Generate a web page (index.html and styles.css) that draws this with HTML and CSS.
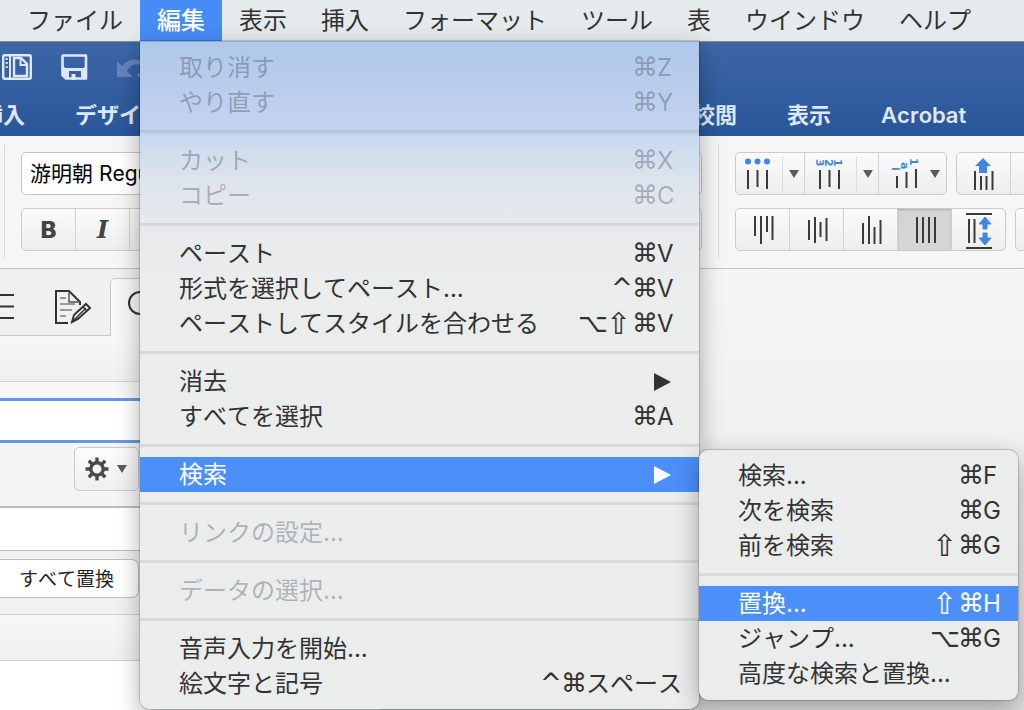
FILE: index.html
```html
<!DOCTYPE html>
<html lang="ja">
<head>
<meta charset="utf-8">
<title>編集メニュー</title>
<link rel="stylesheet" href="styles.css">
</head>
<body>
<nav class="menubar" aria-label="メニューバー">
  <ul class="menubar-list">
    <li><button class="menubar-item">ファイル</button></li>
    <li class="menubar-open">
      <button class="menubar-item is-open">編集</button>
      <ul class="menu menu-edit">
        <li><button class="item" disabled><span>取り消す</span><span class="keys"><i>⌘</i><b>Z</b></span></button></li>
        <li><button class="item" disabled><span>やり直す</span><span class="keys"><i>⌘</i><b>Y</b></span></button></li>
        <li class="rule"></li>
        <li><button class="item" disabled><span>カット</span><span class="keys"><i>⌘</i><b>X</b></span></button></li>
        <li><button class="item" disabled><span>コピー</span><span class="keys"><i>⌘</i><b>C</b></span></button></li>
        <li class="rule"></li>
        <li><button class="item"><span>ペースト</span><span class="keys"><i>⌘</i><b>V</b></span></button></li>
        <li><button class="item"><span>形式を選択してペースト...</span><span class="keys"><i class="ctrl">^</i><i>⌘</i><b>V</b></span></button></li>
        <li><button class="item"><span>ペーストしてスタイルを合わせる</span><span class="keys"><i class="opt">⌥</i><i class="shift">⇧</i><i>⌘</i><b>V</b></span></button></li>
        <li class="rule"></li>
        <li><button class="item"><span>消去</span><svg class="more" viewBox="0 0 18 18"><path d="M0 0L17 9L0 18Z"/></svg></button></li>
        <li><button class="item"><span>すべてを選択</span><span class="keys"><i>⌘</i><b>A</b></span></button></li>
        <li class="rule"></li>
        <li class="has-submenu">
          <button class="item is-active"><span>検索</span><svg class="more" viewBox="0 0 18 18"><path d="M0 0L17 9L0 18Z"/></svg></button>
          <ul class="menu menu-find">
            <li><button class="item"><span>検索...</span><span class="keys"><i>⌘</i><b>F</b></span></button></li>
            <li><button class="item"><span>次を検索</span><span class="keys"><i>⌘</i><b>G</b></span></button></li>
            <li><button class="item"><span>前を検索</span><span class="keys"><i class="shift">⇧</i><i>⌘</i><b>G</b></span></button></li>
            <li class="rule"></li>
            <li><button class="item is-active"><span>置換...</span><span class="keys"><i class="shift">⇧</i><i>⌘</i><b>H</b></span></button></li>
            <li><button class="item"><span>ジャンプ...</span><span class="keys"><i class="opt">⌥</i><i>⌘</i><b>G</b></span></button></li>
            <li><button class="item"><span>高度な検索と置換...</span></button></li>
          </ul>
        </li>
        <li class="rule"></li>
        <li><button class="item" disabled><span>リンクの設定...</span></button></li>
        <li class="rule"></li>
        <li><button class="item" disabled><span>データの選択...</span></button></li>
        <li class="rule"></li>
        <li><button class="item"><span>音声入力を開始...</span></button></li>
        <li><button class="item"><span>絵文字と記号</span><span class="keys"><i class="ctrl">^</i><i>⌘</i><b>スペース</b></span></button></li>
      </ul>
    </li>
    <li><button class="menubar-item">表示</button></li>
    <li><button class="menubar-item">挿入</button></li>
    <li><button class="menubar-item">フォーマット</button></li>
    <li><button class="menubar-item">ツール</button></li>
    <li><button class="menubar-item">表</button></li>
    <li><button class="menubar-item">ウインドウ</button></li>
    <li><button class="menubar-item">ヘルプ</button></li>
  </ul>
</nav>

<header class="titlebar">
  <div class="quick">
    <button class="quick-btn" aria-label="表示切替">
      <svg width="30" height="26" viewBox="0 0 30 26"><rect x="1.2" y="1.2" width="27.6" height="23.6" rx="1.5" fill="none" stroke="currentColor" stroke-width="2.4"/><path d="M8 1V25" stroke="currentColor" stroke-width="2"/><path d="M4.7 4V15" stroke="currentColor" stroke-width="2" stroke-dasharray="2 2"/><path d="M12 4H19L25 10V22H12Z" fill="none" stroke="currentColor" stroke-width="2.4"/><path d="M18.500 4V11H25" fill="none" stroke="currentColor" stroke-width="2"/></svg>
    </button>
    <button class="quick-btn" aria-label="保存">
      <svg width="27" height="26" viewBox="0 0 27 26"><path d="M2 1.500H25V24.500H5L1.500 21V2Z" fill="none" stroke="currentColor" stroke-width="2.600" stroke-linejoin="round"/><path d="M2 11L4 14H23L25 11V25H20V17H8V25H5L2 21Z" fill="currentColor"/><rect x="10.500" y="20" width="4" height="6" fill="currentColor"/></svg>
    </button>
    <button class="quick-btn is-faint" aria-label="元に戻す">
      <svg width="30" height="26" viewBox="0 0 30 26"><path d="M0 7V23H16L10 17C14 10 20 8 27 13V8C18 3 10 6 5 12Z" fill="currentColor"/><circle cx="22" cy="21" r="2" fill="currentColor"/></svg>
    </button>
  </div>
  <nav class="tabs" aria-label="リボン">
    <a href="#">挿入</a><a href="#">デザイン</a><a href="#">レイアウト</a><a href="#">参考資料</a><a href="#">差し込み文書</a><a href="#">校閲</a><a href="#">表示</a><a href="#">Acrobat</a>
  </nav>
</header>

<section class="ribbon">
  <div class="font-tools">
    <div class="tool-row">
      <input class="font-name" aria-label="フォント" value="游明朝 Regular">
    </div>
    <div class="tool-row">
      <div class="group group-wide">
        <button class="cell glyph">B</button>
        <button class="cell glyph italic">I</button>
        <span class="cell-rest"></span>
      </div>
    </div>
  </div>
  <div class="para-tools">
    <div class="tool-row">
      <div class="group">
        <button class="cell split" aria-label="箇条書き">
          <svg width="46" height="43" viewBox="0 0 46 43"><g class="blue"><circle cx="12" cy="9.500" r="3"/><circle cx="21.500" cy="9.500" r="3"/><circle cx="31" cy="9.500" r="3"/></g><path class="bars" d="M12 18V37M21.500 18V35M31 18V37"/></svg>
          <span class="caret-box"><span class="caret"></span></span>
        </button>
        <button class="cell split" aria-label="段落番号">
          <svg width="51" height="43" viewBox="0 0 51 43"><g class="blue digits"><text transform="translate(11 7) rotate(90)">3</text><text transform="translate(20 7) rotate(90)">2</text><text transform="translate(29 7) rotate(90)">1</text></g><path class="bars" d="M15 18V37M24.500 18V35M34 18V37"/></svg>
          <span class="caret-box"><span class="caret"></span></span>
        </button>
        <button class="cell split plain" aria-label="アウトライン">
          <svg width="45" height="43" viewBox="0 0 45 43"><g class="blue digits"><text transform="translate(13 15) rotate(90)">i</text><text transform="translate(22 10) rotate(90)">a</text><text transform="translate(31 6) rotate(90)">1</text></g><path class="bars" d="M18 24V36M27.500 20V36M37 17V36"/></svg>
          <span class="caret-box"><span class="caret"></span></span>
        </button>
      </div>
      <div class="group">
        <button class="cell" aria-label="インデント解除">
          <svg width="53" height="43" viewBox="0 0 53 43"><path class="blue" d="M26 6L34 14H30V21H22V14H18Z"/><path class="bars" d="M18 19V38M24 24V38M29.500 24V38M35.500 19V38"/></svg>
        </button>
        <button class="cell" aria-label="インデント"><svg width="54" height="43" viewBox="0 0 54 43"><path class="bars" d="M28 18V36M34 23V36"/></svg></button>
      </div>
    </div>
    <div class="tool-row">
      <div class="group">
        <button class="cell" aria-label="上揃え"><svg width="53" height="43" viewBox="0 0 53 43"><path class="bars" d="M19 8V28M25 8V36M31 8V24M36.500 8V32"/></svg></button>
        <button class="cell" aria-label="中央揃え"><svg width="53" height="43" viewBox="0 0 53 43"><path class="bars" d="M19 12V32M25 9V35M30.500 14V29M36.500 10V33"/></svg></button>
        <button class="cell" aria-label="下揃え"><svg width="53" height="43" viewBox="0 0 53 43"><path class="bars" d="M19 15V36M25 8V36M30.500 19V36M36.500 12V36"/></svg></button>
        <button class="cell is-pressed" aria-label="両端揃え"><svg width="53" height="43" viewBox="0 0 53 43"><path class="bars" d="M19 9V35M25 9V35M31 9V35M37 9V35"/></svg></button>
        <button class="cell" aria-label="均等割り付け"><svg width="53" height="43" viewBox="0 0 53 43"><path class="bars" d="M14 6H40M14 40H40M17 11V35M22.500 11V35"/><path class="blue" d="M33 9L39 16H35V21H31V16H27ZM33 37L39 30H35V25H31V30H27Z" stroke="#3f87e5"/></svg></button>
      </div>
      <div class="group">
        <button class="cell" aria-label="行間"><svg width="53" height="43" viewBox="0 0 53 43"><path class="bars" d="M25 8V34"/></svg></button>
      </div>
    </div>
  </div>
</section>

<main class="work">
  <aside class="pane">
    <div class="pane-tabs">
      <button class="pane-tab tab-list" aria-label="見出し"><svg width="15" height="43" viewBox="0 0 15 43"><path d="M0 10H14M0 21.500H14M0 33H14" stroke="#333" stroke-width="2"/></svg></button>
      <button class="pane-tab tab-edit" aria-label="変更履歴">
        <svg width="38" height="36" viewBox="0 0 38 36"><path d="M14 34H2V2H15L26 13V16" fill="none" stroke="#333" stroke-width="2"/><path d="M15 2V13H26" fill="none" stroke="#555" stroke-width="1.500"/><path d="M6 9H12M6 15H21M6 21H18M6 27H12" stroke="#999" stroke-width="2"/><path d="M18 33L20 26L32 15L36 19L24 30Z" fill="#fff" stroke="#333" stroke-width="2"/><path d="M29 18L33 22M20 31L32 19" stroke="#333" stroke-width="1.500"/></svg>
      </button>
      <button class="pane-tab tab-find is-active" aria-label="検索">
        <svg width="34" height="34" viewBox="0 0 34 34"><circle cx="14" cy="14" r="11" fill="none" stroke="#333" stroke-width="2"/><path d="M22 22L32 32" stroke="#333" stroke-width="2"/></svg>
      </button>
    </div>
    <div class="pane-head"></div>
    <div class="field-gap"></div>
    <input class="find-field" aria-label="検索する文字列">
    <div class="pane-options">
      <button class="gear" aria-label="検索オプション">
        <svg width="24" height="24" viewBox="-12 -12 24 24"><circle r="6.200" fill="none" stroke="#4a4a4a" stroke-width="3.400"/><path d="M0 -7V-11.500M0 7V11.500M-7 0H-11.500M7 0H11.500M5 -5L8.200 -8.200M-5 -5L-8.200 -8.200M5 5L8.200 8.200M-5 5L-8.200 8.200" stroke="#4a4a4a" stroke-width="3.400"/></svg>
        <span class="caret"></span>
      </button>
    </div>
    <input class="replace-field" aria-label="置換後の文字列">
    <div class="pane-actions"><button class="replace-all">すべて置換</button></div>
    <div class="pane-foot"></div>
    <div class="pane-results"></div>
  </aside>
  <div class="document"></div>
</main>
</body>
</html>
```

FILE: styles.css
```css
* { box-sizing: border-box; }

body {
  margin: 0;
  height: 100vh;
  display: flex;
  flex-direction: column;
  overflow: hidden;
  font-family: Inter, "Noto Sans CJK JP", sans-serif;
  font-kerning: none;
  color: #333;
  background: #f4f4f4;
}

ul { list-style: none; margin: 0; padding: 0; }
button { font: inherit; font-kerning: inherit; color: inherit; border: 0; margin: 0; padding: 0; background: none; }
input { font: inherit; margin: 0; border-radius: 0; outline: 0; }
svg { display: block; flex: none; }

/* Menu bar */
.menubar { flex: none; position: relative; z-index: 10; background: #e5ebed; border-bottom: 1px solid #7f8b9b; }
.menubar-list { display: flex; padding-left: 10px; }
.menubar-open { position: relative; }
.menubar-item { display: block; height: 41px; padding: 0 17px; font-size: 24px; line-height: 41px; white-space: nowrap; }
.menubar-item.is-open { background: #468cf7; color: #fff; font-weight: 500; }

/* Menus */
.menu {
  position: absolute;
  background: #ebecec;
  box-shadow: 0 0 0 1px rgba(0, 0, 0, .16), 0 8px 24px rgba(0, 0, 0, .32);
}
.menu-edit {
  top: 100%;
  left: 0;
  width: 559px;
  padding: 8px 0;
  border-top: 1px solid #8fa9cf;
  border-radius: 0 0 10px 10px;
  background: linear-gradient(#afc8e9 0, #c3d3ee 88px, #cddced 105px, #dfe5ec 145px, #e8eaec 190px, #ebecec 240px);
}
.menu-find { left: 100%; top: -7px; width: 319px; padding: 8px 0 9px; border-radius: 9px; }
.item {
  display: flex;
  justify-content: space-between;
  align-items: center;
  width: 100%;
  height: 35px;
  padding: 0 17px 0 39px;
  font-size: 24px;
  line-height: 35px;
  text-align: left;
  white-space: nowrap;
}
.menu-find .item { padding-right: 10px; }
.item:disabled { color: rgba(40, 50, 70, .32); }
.item.is-active { background: #4c8ff8; color: #fff; }
.has-submenu { position: relative; }
.rule { height: 23px; padding: 10px 0; }
.rule::before { content: ""; display: block; height: 3px; background: rgba(90, 100, 100, .13); }
.keys { display: flex; }
.keys b { min-width: 25px; font-weight: 400; }
.keys i { width: 25px; font-style: normal; font-size: 26px; font-family: "DejaVu Sans", sans-serif; }
.keys .shift { width: 26px; font-size: 30px; }
.keys .opt { width: 28px; }
.keys .ctrl { width: 21px; }
.more { width: 18px; height: 18px; margin-right: 10px; fill: currentColor; }

/* Title bar */
.titlebar {
  flex: none;
  height: 94px;
  border-top: 1px solid #54657d;
  background: linear-gradient(#3c66a6, #2a569a);
  color: #dfe8f6;
}
.quick { display: flex; gap: 29px; padding: 11px 0 0 2px; }
.quick-btn { display: block; }
.quick-btn.is-faint { color: #6485bb; }
.tabs { display: flex; gap: 50px; margin-left: -19px; padding-top: 18px; }
.tabs a { color: inherit; text-decoration: none; font-size: 22px; line-height: 34px; font-weight: 600; white-space: nowrap; }

/* Ribbon */
.ribbon {
  flex: none;
  display: flex;
  gap: 16px;
  padding: 9px 0 9px 4px;
  border-bottom: 1px solid #c2c2c2;
  background: #f6f6f6;
  overflow: hidden;
}
.font-tools, .para-tools {
  display: flex;
  flex-direction: column;
  gap: 13px;
  padding: 7px 0 8px 16px;
  border-left: 1px solid #dadada;
}
.font-tools { flex: 0 0 698px; }
.tool-row { display: flex; gap: 9px; }
.font-name { width: 100%; height: 43px; padding: 0 8px 3px; border: 1px solid #c3c3c3; border-radius: 5px; background: #fff; color: #000; font-size: 21px; }
.group { display: flex; height: 43px; border: 1px solid #cbcbcb; border-radius: 5px; background: linear-gradient(#fbfbfb, #ededed); overflow: hidden; }
.group-wide { width: 100%; }
.cell { display: flex; align-items: center; height: 41px; border-right: 1px solid #d2d2d2; }
.cell:last-child { border-right: 0; }
.cell.is-pressed { background: #d4d5d4; box-shadow: inset 0 1px 2px #aaa; }
.glyph { width: 54px; justify-content: center; font: bold 23px "DejaVu Sans", sans-serif; color: #444; }
.glyph.italic { font: italic bold 24px "DejaVu Serif", serif; }
.caret-box { display: flex; align-items: center; justify-content: center; width: 22px; height: 34px; border-left: 1px solid #dcdcdc; }
.plain .caret-box { border-left: 0; }
.caret { border: 5px solid transparent; border-top: 8px solid #5a5a5a; border-bottom: 0; }
.bars { fill: none; stroke: #3a3a3a; stroke-width: 2; }
.blue { fill: #3f87e5; }
.digits { font: bold 11px "DejaVu Sans", sans-serif; }

/* Work area */
.work { flex: 1; display: flex; min-height: 0; }
.pane { flex: 0 0 380px; display: flex; flex-direction: column; }
.pane-tabs { display: flex; height: 67px; padding-top: 9px; background: #f0f0f0; }
.pane-tab { height: 58px; border-bottom: 1px solid #c6c6c6; }
.tab-list { width: 54px; }
.tab-edit { width: 56px; }
.tab-find { flex: 1; padding: 0 0 3px 15px; border: 1px solid #c6c6c6; border-bottom: 0; border-radius: 5px 0 0; background: #f8f8f8; }
.pane-head { height: 46px; border-bottom: 1px solid #d0d0d0; background: linear-gradient(#f8f8f8, #efefee); }
.field-gap { height: 16px; background: #f7f7f7; }
.find-field { width: 100%; height: 45px; border: solid #6598e4; border-width: 3px 0; background: #fff; }
.pane-options { height: 63px; padding: 4px 0 0 74px; background: #f5f5f5; }
.gear { display: flex; align-items: center; gap: 8px; width: 65px; height: 44px; padding-left: 10px; border: 1px solid #c9c9c9; border-radius: 5px; background: linear-gradient(#fcfcfc, #efefef); }
.replace-field { width: 100%; height: 45px; border: solid #bcbcbc; border-width: 2px 0 1px; background: #fff; }
.pane-actions { height: 64px; padding-top: 8px; border-bottom: 1px solid #d0d0d0; background: #f1f1f1; }
.replace-all { width: 139px; height: 39px; padding: 0 5px 3px 0; border: 1px solid #bdbdbd; border-left: 0; border-radius: 0 7px 7px 0; background: #fff; color: #222; font-size: 19px; }
.pane-foot { height: 46px; border-bottom: 1px solid #d0d0d0; background: linear-gradient(#f7f7f7, #efefee); }
.pane-results { flex: 1; background: #fff; }
.document { flex: 1; background: linear-gradient(#f5f5f5, #efefef 45%, #e0e0e0); }
```
